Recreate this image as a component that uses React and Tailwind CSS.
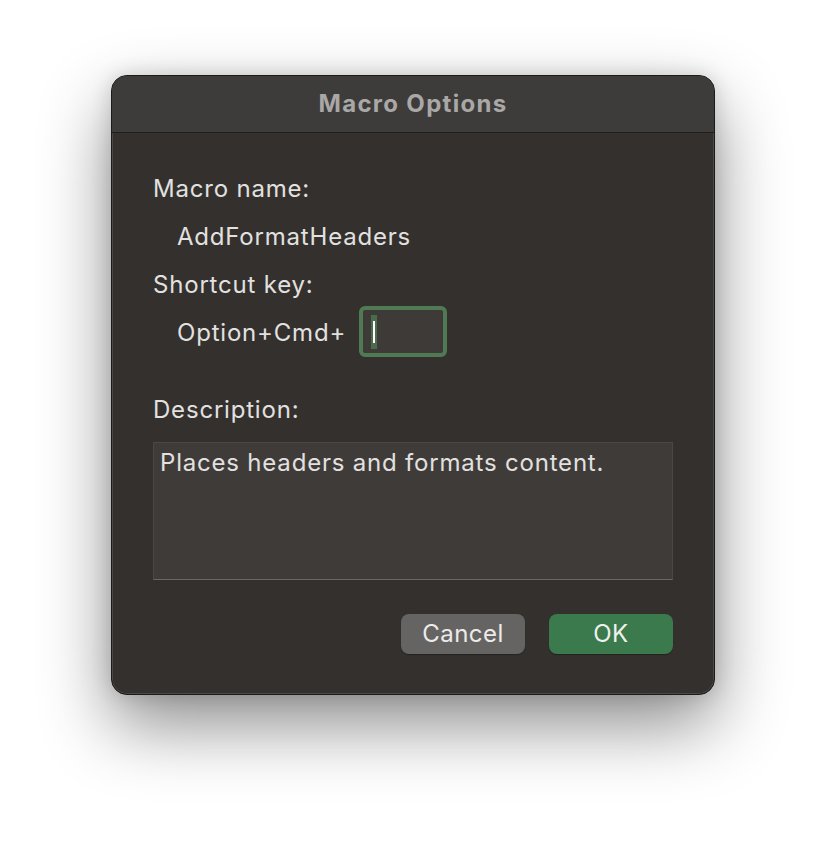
import React from "react";

export default function App() {
  return (
    <div
      className="w-[826px] h-[842px] bg-white pt-[75px] pl-[111px]"
      style={{ fontFamily: "Inter, 'Noto Sans', sans-serif" }}
    >
      <div className="w-[604px] h-[620px] rounded-[16px] bg-[#33302d] border border-[#1c1b1a] shadow-[0_30px_70px_rgba(0,0,0,0.45),0_0_20px_rgba(0,0,0,0.15),inset_0_0_0_1px_rgba(255,255,255,0.12)] overflow-hidden flex flex-col">
        <div className="h-[57px] shrink-0 bg-[#3e3c3a] border-b border-[#1f1e1d] flex items-center justify-center">
          <span className="text-[24px] font-bold text-[#a9a8a7] tracking-[1.3px]">Macro Options</span>
        </div>
        <div className="flex flex-col pl-[41px] pr-[41px] text-[#e2e1e0] text-[24px] tracking-[0.8px]">
          <div className="h-[30px] mt-[41px] flex items-center">Macro name:</div>
          <div className="h-[30px] mt-[18px] pl-[24px] flex items-center">AddFormatHeaders</div>
          <div className="h-[30px] mt-[18px] flex items-center">Shortcut key:</div>
          <div className="mt-[6px] pl-[24px] flex items-center">
            <span className="pt-[3px]">Option+Cmd+</span>
            <div className="ml-[13px] w-[88px] h-[51px] rounded-[6px] border-[4px] border-[#4f7a53] bg-[#3e3a37] flex items-center pl-[8px]">
              <div className="w-[6px] h-[34px] bg-[#4a6b4c] flex items-center justify-center">
                <div className="w-[2px] h-[22px] bg-white"></div>
              </div>
            </div>
          </div>
          <div className="h-[30px] mt-[38px] flex items-center">Description:</div>
          <div className="mt-[17px] w-[520px] h-[138px] bg-[#3f3b38] border border-[#4a4744] border-b-[#6a6765] px-[6px] pt-[2px]">
            Places headers and formats content.
          </div>
          <div className="mt-[34px] flex justify-end gap-[24px] pr-[0px]">
            <button className="w-[124px] h-[40px] rounded-[8px] bg-[#666462] text-[#ecebea] text-[24px] tracking-[0.5px] shadow-[0_1px_1px_rgba(0,0,0,0.3)]">
              Cancel
            </button>
            <button className="w-[124px] h-[40px] rounded-[8px] bg-[#3b7a4c] text-[#f0f0ee] text-[24px] tracking-[0.5px] shadow-[0_1px_1px_rgba(0,0,0,0.3)]">
              OK
            </button>
          </div>
        </div>
      </div>
    </div>
  );
}
